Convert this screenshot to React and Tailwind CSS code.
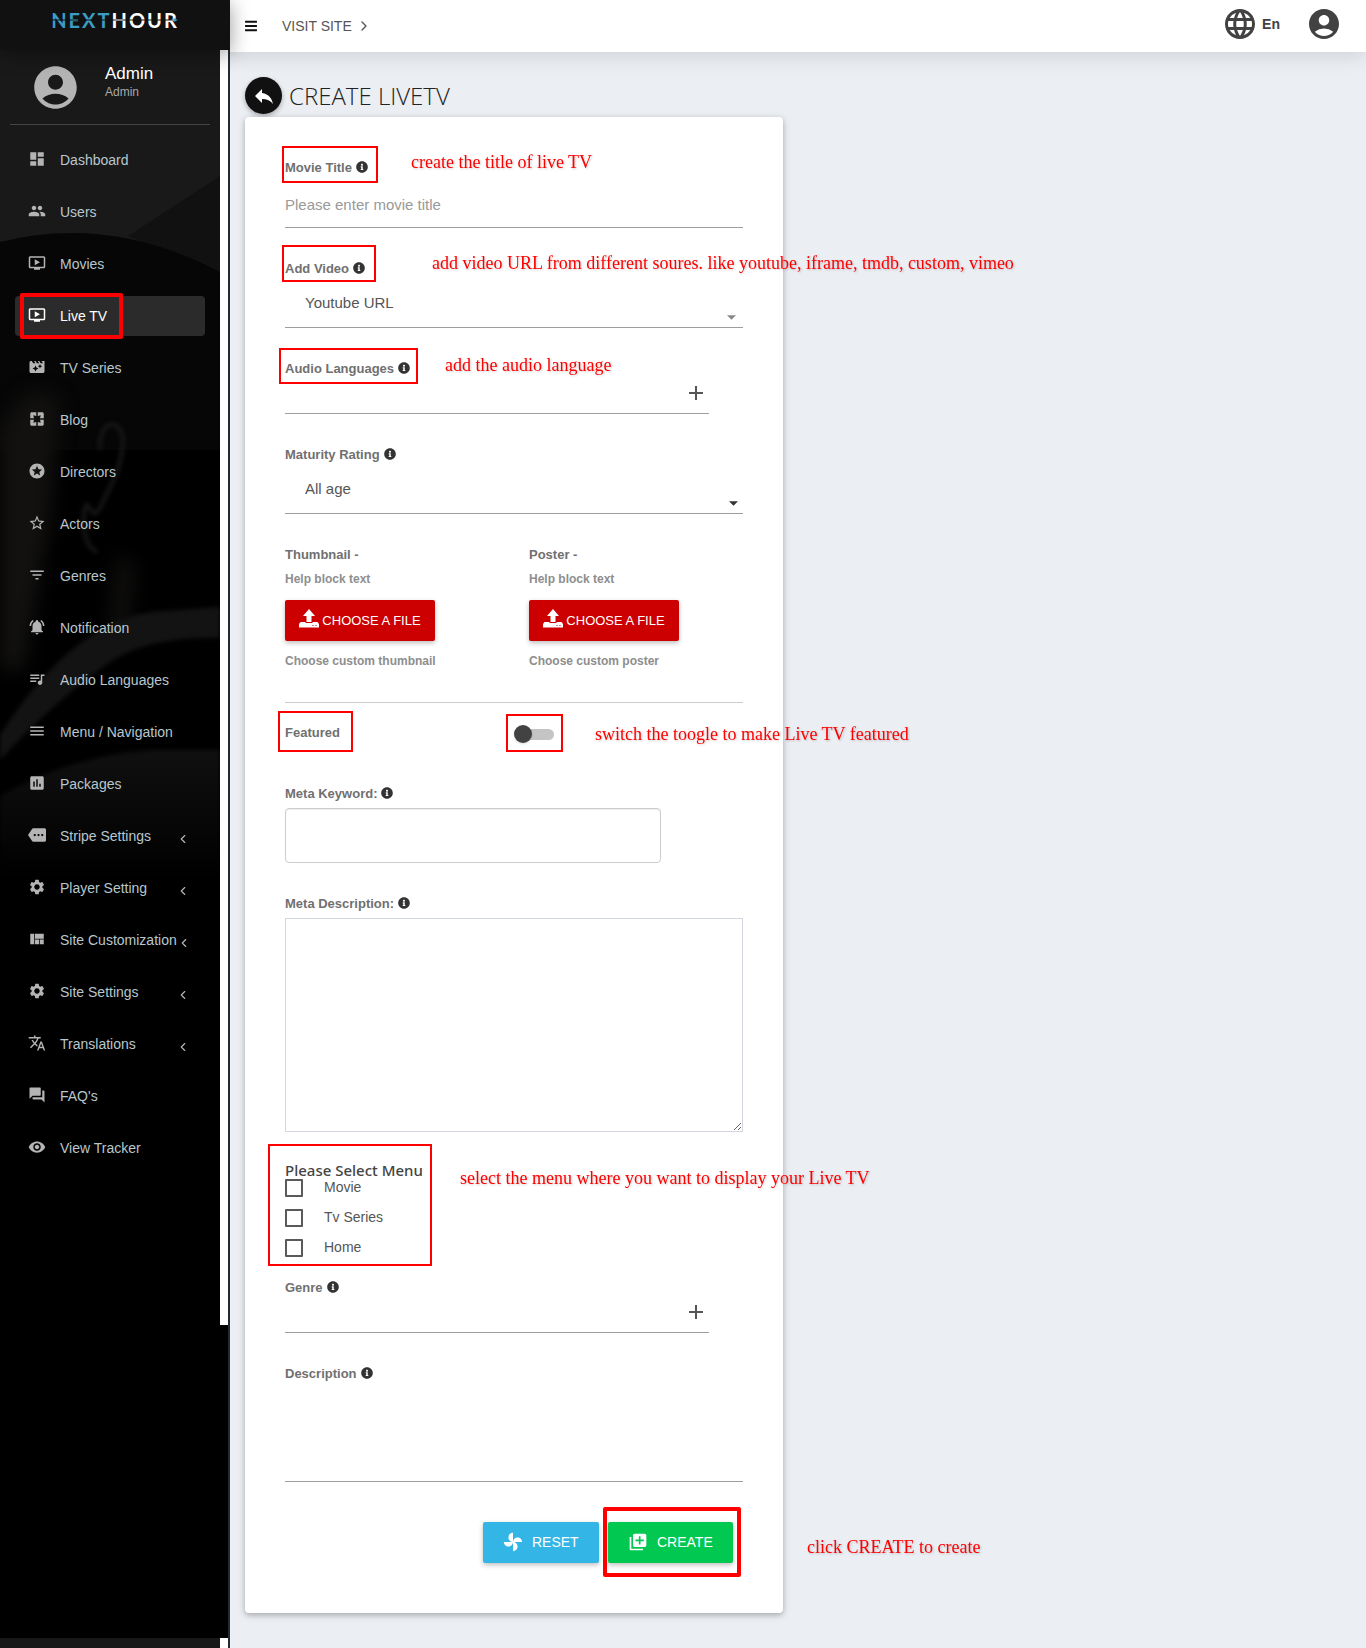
import React from "react";
import {
  MdDashboard, MdPeople, MdOndemandVideo, MdMovieFilter, MdPages, MdStars, MdStarBorder,
  MdFilterList, MdNotificationsActive, MdQueueMusic, MdMenu, MdAssessment, MdMore, MdSettings,
  MdViewQuilt, MdTranslate, MdQuestionAnswer, MdVisibility, MdAccountCircle, MdLanguage,
  MdReply, MdLibraryAdd, MdAdd,
} from "react-icons/md";
import { FaInfoCircle, FaBars } from "react-icons/fa";
import { ChevronLeft, ChevronRight } from "lucide-react";

const NAV = [
  { icon: MdDashboard, label: "Dashboard" },
  { icon: MdPeople, label: "Users" },
  { icon: MdOndemandVideo, label: "Movies" },
  { icon: MdOndemandVideo, label: "Live TV", active: true },
  { icon: MdMovieFilter, label: "TV Series" },
  { icon: MdPages, label: "Blog" },
  { icon: MdStars, label: "Directors" },
  { icon: MdStarBorder, label: "Actors" },
  { icon: MdFilterList, label: "Genres" },
  { icon: MdNotificationsActive, label: "Notification" },
  { icon: MdQueueMusic, label: "Audio Languages" },
  { icon: MdMenu, label: "Menu / Navigation" },
  { icon: MdAssessment, label: "Packages" },
  { icon: MdMore, label: "Stripe Settings", more: true },
  { icon: MdSettings, label: "Player Setting", more: true },
  { icon: MdViewQuilt, label: "Site Customization", more: true },
  { icon: MdSettings, label: "Site Settings", more: true },
  { icon: MdTranslate, label: "Translations", more: true },
  { icon: MdQuestionAnswer, label: "FAQ's" },
  { icon: MdVisibility, label: "View Tracker" },
];

function Backdrop() {
  return (
    <svg className="absolute left-0 top-0 h-[1270px] w-full" viewBox="0 0 220 1270" preserveAspectRatio="none" aria-hidden="true">
      <defs>
        <linearGradient id="arm" x1="0" y1="0" x2="0" y2="1">
          <stop offset="0" stopColor="#101010" />
          <stop offset="1" stopColor="#000" />
        </linearGradient>
        <filter id="soft" x="-50%" y="-50%" width="200%" height="200%" colorInterpolationFilters="sRGB">
          <feGaussianBlur stdDeviation="2" />
        </filter>
        <filter id="softer" x="-50%" y="-50%" width="200%" height="200%" colorInterpolationFilters="sRGB">
          <feGaussianBlur stdDeviation="9" />
        </filter>
      </defs>
      <rect width="220" height="210" fill="#191919" />
      <path d="M220 126L128 186L220 226Z" fill="#111" />
      <path d="M0 192Q110 164 220 222V400H0Z" fill="#060606" />
      <path d="M12 360Q30 330 60 350L50 470L24 620H0V380Z" fill="#121110" filter="url(#softer)" />
      <path d="M100 400C98 368 122 368 123 390C122 420 108 440 100 458C90 476 88 440 84 462C82 490 90 500 98 502" fill="none" stroke="#171717" strokeWidth="4" filter="url(#soft)" />
      <path d="M116 505L136 515L128 590L106 600Z" fill="#0f0e0d" filter="url(#softer)" />
      <path d="M0 685Q70 575 150 562L220 557V588Q150 586 110 612Q50 655 0 710Z" fill="#131313" filter="url(#soft)" />
      <path d="M0 746Q70 706 150 700H220V830H0Z" fill="url(#arm)" filter="url(#soft)" />
    </svg>
  );
}

function Logo() {
  return (
    <a href="#home" className="relative flex h-5 items-center font-['Lato',sans-serif] text-xl font-bold leading-5 tracking-widest text-white" aria-label="NextHour">
      <span className="text-[#3c9dc4]">NEXT</span>
      <span>HOUR</span>
      <svg viewBox="0 0 130 6" className="absolute left-0 top-[7px] h-[6px] w-full" aria-hidden="true">
        <path d="M0 3H125" stroke="#111" strokeWidth="1" />
        <path d="M125 1L129 3L125 5Z" fill="#3c9dc4" />
      </svg>
    </a>
  );
}

function Sidebar() {
  return (
    <aside className="relative flex w-[230px] shrink-0 flex-col border-r-2 border-[#222d32] bg-black">
      <div className="relative z-10 -mr-0.5 flex h-[50px] justify-center bg-[#111] pt-[10px] shadow-[0_4px_20px_rgba(0,0,0,0.4)]">
        <Logo />
      </div>
      <div className="flex flex-1 flex-col">
        <div className="flex h-[1275px]">
          <div className="relative min-w-0 flex-1">
            <Backdrop />
            <div className="relative">
              <div className="mx-[10px] flex h-[75px] border-b border-[#444] pl-5 pt-3">
                <MdAccountCircle className="h-[51px] w-[51px] text-[#b4b4b4]" />
                <div className="ml-6">
                  <p className="text-[17px] leading-6 text-white">Admin</p>
                  <p className="text-xs leading-3 text-[#aaa]">Admin</p>
                </div>
              </div>
              <nav className="mt-[15px] flex flex-col gap-3 pl-[15px] pr-[15px]">
                {NAV.map(({ icon: Icon, label, active, more }) => (
                  <a
                    key={label}
                    href="#nav"
                    className={
                      active
                        ? "flex h-10 items-center rounded bg-[#2b2b2b] pl-[13px] text-sm text-white"
                        : "flex h-10 items-center rounded pl-[13px] text-sm text-[#b8c7ce]"
                    }
                  >
                    <Icon className={active ? "mb-0.5 h-[18px] w-[18px] shrink-0 text-white" : "mb-0.5 h-[18px] w-[18px] shrink-0 text-[#b4b4b4]"} />
                    <span className="ml-[14px] flex-1 whitespace-nowrap">{label}</span>
                    {more && <ChevronLeft className="mr-[15px] mt-[6px] h-[14px] w-[14px] shrink-0 text-[#b4b4b4]" />}
                  </a>
                ))}
              </nav>
            </div>
            <div className="absolute left-5 top-[243px] h-[46px] w-[103px] rounded-xs border-4 border-[#f00]" />
          </div>
          <div className="w-2 bg-white" />
        </div>
        <div className="flex-1" />
        <div className="flex h-[10px]">
          <div className="flex-1 bg-[#181818]" />
          <div className="w-2 bg-white" />
        </div>
      </div>
    </aside>
  );
}

function Info() {
  return <FaInfoCircle className="ml-1 inline-block h-3 w-3 align-[-1px] text-[#333]" />;
}

function Label({ htmlFor, info, children }) {
  return (
    <label htmlFor={htmlFor} className="block h-5 text-[13px] font-bold leading-[22px] text-[#707070]">
      {children}
      {info && <Info />}
    </label>
  );
}

function Mark({ className }) {
  return <div className={`pointer-events-none absolute border-2 border-[#f00] ${className}`} />;
}

function Note({ className, children }) {
  return (
    <p className={`absolute whitespace-nowrap font-['Liberation_Serif',serif] text-lg leading-5 text-[#f00] drop-shadow-[1px_1px_1px_rgba(0,0,0,0.2)] ${className}`}>
      {children}
    </p>
  );
}

function Caret({ className }) {
  return (
    <svg viewBox="0 0 10 5" className={`pointer-events-none absolute h-[5px] w-[9px] ${className}`} aria-hidden="true">
      <path d="M0 0H10L5 5Z" fill="currentColor" />
    </svg>
  );
}

function UploadIcon() {
  return (
    <svg viewBox="0 0 20 20" className="mb-1 h-5 w-5" fill="currentColor" aria-hidden="true">
      <path d="M10 0L16 7H12.5V13H7.5V7H4Z" />
      <path fillRule="evenodd" d="M1.5 13H6.500V14H13.500V13H18.500L20 15V18.500H0V15ZM13.500 16V17H14.500V16ZM16.500 16V17H17.500V16Z" />
    </svg>
  );
}

function PlusField({ id }) {
  return (
    <div className="mr-[34px] flex h-9 items-center border-b border-[#9e9e9e]">
      <input id={id} className="min-w-0 flex-1 text-[15px] outline-none" />
      <button type="button" aria-label="Add" className="mb-[6px] mr-px">
        <MdAdd className="h-6 w-6 text-[#555]" />
      </button>
    </div>
  );
}

function FilePick({ title, help }) {
  return (
    <div>
      <Label>{title} -</Label>
      <p className="mt-1 h-5 text-xs font-bold leading-[22px] text-[#8e8e8e]">Help block text</p>
      <button type="button" className="mt-3 flex h-[41px] w-[150px] items-center justify-center gap-[3px] rounded-xs bg-[#c00] text-[13px] text-white shadow-[0_2px_5px_rgba(0,0,0,0.26)]">
        <UploadIcon />
        <span className="whitespace-nowrap">CHOOSE A FILE</span>
      </button>
      <p className="mt-[10px] text-xs font-bold leading-5 text-[#8e8e8e]">{help}</p>
    </div>
  );
}

function LiveTvForm() {
  return (
    <form className="mr-[15px] rounded bg-white px-10 pb-[50px] pt-10 shadow-[0_2px_5px_rgba(0,0,0,0.2),0_2px_10px_rgba(0,0,0,0.12)]" onSubmit={(e) => e.preventDefault()}>
      <div className="relative">
        <Label htmlFor="title" info>Movie Title</Label>
        <input id="title" placeholder="Please enter movie title" className="mt-[6px] block h-[45px] w-full border-b border-[#9e9e9e] pb-0.5 text-[15px] outline-none placeholder:text-[#999]" />
        <Mark className="-left-[3px] -top-[11px] h-[37px] w-24" />
        <Note className="left-[126px] -top-[5px]">create the title of live TV</Note>
      </div>

      <div className="relative mt-[30px]">
        <Label htmlFor="video" info>Add Video</Label>
        <select id="video" className="block h-[50px] w-full appearance-none border-b border-[#9e9e9e] pl-5 pt-0.5 text-[15px] text-[#555] outline-none">
          <option>Youtube URL</option>
        </select>
        <Caret className="bottom-2 right-[7px] text-[#888]" />
        <Mark className="-left-[3px] -top-[13px] h-[37px] w-[94px]" />
        <Note className="left-[147px] -top-[5px]">add video URL from different soures. like youtube, iframe, tmdb, custom, vimeo</Note>
      </div>

      <div className="relative mt-[30px]">
        <Label htmlFor="audio" info>Audio Languages</Label>
        <PlusField id="audio" />
        <Mark className="-left-[6px] -top-[10px] h-9 w-[139px]" />
        <Note className="left-[160px] -top-[3px]">add the audio language</Note>
      </div>

      <div className="relative mt-[30px]">
        <Label htmlFor="rating" info>Maturity Rating</Label>
        <select id="rating" className="block h-[50px] w-full appearance-none border-b border-[#9e9e9e] pl-5 pt-0.5 text-[15px] text-[#555] outline-none">
          <option>All age</option>
        </select>
        <Caret className="bottom-2 right-[5px] text-[#333]" />
      </div>

      <div className="mt-[30px] grid grid-cols-2 gap-[30px] border-b border-[#ccc] pb-[31px]">
        <FilePick title="Thumbnail" help="Choose custom thumbnail" />
        <FilePick title="Poster" help="Choose custom poster" />
      </div>

      <div className="relative mt-[19px] grid grid-cols-2 gap-[30px]">
        <Label htmlFor="featured">Featured</Label>
        <div className="relative -ml-[15px] mt-[3px] flex h-[18px] w-10 items-center">
          <input id="featured" type="checkbox" role="switch" className="peer absolute inset-0 opacity-0" />
          <span className="ml-1 h-[11px] w-9 rounded-full bg-[#c4c4c4]" />
          <span className="absolute left-0 h-[18px] w-[18px] rounded-full bg-[#424242] shadow-sm peer-checked:left-[22px]" />
        </div>
        <Mark className="-left-[7px] -top-[11px] h-[41px] w-[75px]" />
        <Mark className="left-[221px] -top-2 h-[38px] w-[57px]" />
        <Note className="left-[310px] top-[2px]">switch the toogle to make Live TV featured</Note>
      </div>

      <div className="mt-10">
        <Label htmlFor="keyword" info>Meta Keyword:</Label>
        <div className="mr-[82px] mt-[5px]">
          <input id="keyword" className="block h-[55px] w-full rounded border border-[#ccc] px-3 shadow-[inset_0_1px_1px_rgba(0,0,0,0.075)] outline-none" />
        </div>
      </div>

      <div className="mt-[30px]">
        <Label htmlFor="metadesc" info>Meta Description:</Label>
        <textarea id="metadesc" className="mt-[5px] block h-[214px] w-full border border-[#d2d6de] px-3 outline-none" />
      </div>

      <div className="relative mt-[29px]">
        <fieldset>
          <legend className="block h-[18px] whitespace-nowrap font-['Noto_Sans',sans-serif] text-[15px] font-medium leading-[18px] text-[#444]">Please Select Menu</legend>
          <div className="flex flex-col gap-3">
            {["Movie", "Tv Series", "Home"].map((m) => (
              <label key={m} className="flex h-[18px] items-center text-sm leading-[18px] text-[#555]">
                <input type="checkbox" className="mr-[21px] h-[18px] w-[18px] appearance-none rounded-[1px] border-2 border-[#5a5a5a] checked:bg-[#5a5a5a]" />
                <span className="pb-0.5">{m}</span>
              </label>
            ))}
          </div>
        </fieldset>
        <Mark className="-left-[17px] -top-[17px] h-[122px] w-[164px]" />
        <Note className="left-[175px] top-[7px]">select the menu where you want to display your Live TV</Note>
      </div>

      <div className="mt-5">
        <Label htmlFor="genre" info>Genre</Label>
        <PlusField id="genre" />
      </div>

      <div className="mt-[30px]">
        <Label htmlFor="desc" info>Description</Label>
        <textarea id="desc" className="block h-[99px] w-full resize-none border-b border-[#9e9e9e] outline-none" />
      </div>

      <div className="relative mt-10 flex justify-end gap-[9px] pr-[10px] text-sm text-white">
        <button type="reset" className="flex h-[41px] w-[116px] items-center rounded-xs bg-[#33b5e5] pb-0.5 pl-5 shadow-[0_2px_5px_rgba(0,0,0,0.26)]">
          <svg viewBox="0 0 24 24" className="mr-[9px] h-5 w-5" fill="currentColor" aria-hidden="true">
            <path d="M12 12c0-3 2.5-5.5 5.5-5.5S23 9 23 12H12zm0 0c0 3-2.5 5.5-5.5 5.5S1 15 1 12h11zm0 0c-3 0-5.5-2.5-5.5-5.5S9 1 12 1v11zm0 0c3 0 5.5 2.5 5.5 5.5S15 23 12 23V12z" />
          </svg>
          RESET
        </button>
        <button type="submit" className="flex h-[41px] w-[125px] items-center rounded-xs bg-[#00c851] pb-0.5 pl-5 shadow-[0_2px_5px_rgba(0,0,0,0.26)]">
          <MdLibraryAdd className="mr-[9px] h-5 w-5" />
          CREATE
        </button>
        <div className="pointer-events-none absolute -top-[15px] right-[2px] h-[70px] w-[138px] rounded-xs border-4 border-[#f00]" />
        <Note className="left-[522px] top-[15px]">click CREATE to create</Note>
      </div>
    </form>
  );
}

export default function App() {
  return (
    <div className="flex min-h-screen bg-[#ebeef3] font-['Liberation_Sans',Arial,sans-serif] text-[#333]">
      <Sidebar />
      <div className="flex min-w-0 flex-1 flex-col">
        <header className="flex h-[52px] items-center bg-white px-[15px] shadow-[0_4px_20px_rgba(0,0,0,0.12)]">
          <button type="button" aria-label="Toggle navigation">
            <FaBars className="h-[14px] w-3 text-[#111]" />
          </button>
          <a href="#site" className="ml-[25px] flex items-center gap-1 text-sm text-[#555]">
            VISIT SITE
            <ChevronRight className="h-4 w-4" />
          </a>
          <div className="ml-auto flex items-center pb-1 text-[#424242]">
            <button type="button" className="flex items-center gap-1 text-sm font-bold">
              <MdLanguage className="h-9 w-9" />
              En
            </button>
            <button type="button" aria-label="Account" className="ml-[26px] mr-[9px]">
              <MdAccountCircle className="h-9 w-9" />
            </button>
          </div>
        </header>
        <main className="px-[15px] pb-[30px] pt-[25px]">
          <div className="mb-[3px] flex h-[37px] items-center">
            <a href="#back" aria-label="Back" className="flex h-[37px] w-[37px] items-center justify-center rounded-full bg-[#111] shadow-[0_2px_5px_rgba(0,0,0,0.3)]">
              <MdReply className="h-6 w-6 text-white" />
            </a>
            <h1 className="ml-[7px] font-['Open_Sans',sans-serif] text-2xl font-light leading-8 text-[#222]">CREATE LIVETV</h1>
          </div>
          <div className="grid grid-cols-2">
            <LiveTvForm />
          </div>
        </main>
      </div>
    </div>
  );
}
